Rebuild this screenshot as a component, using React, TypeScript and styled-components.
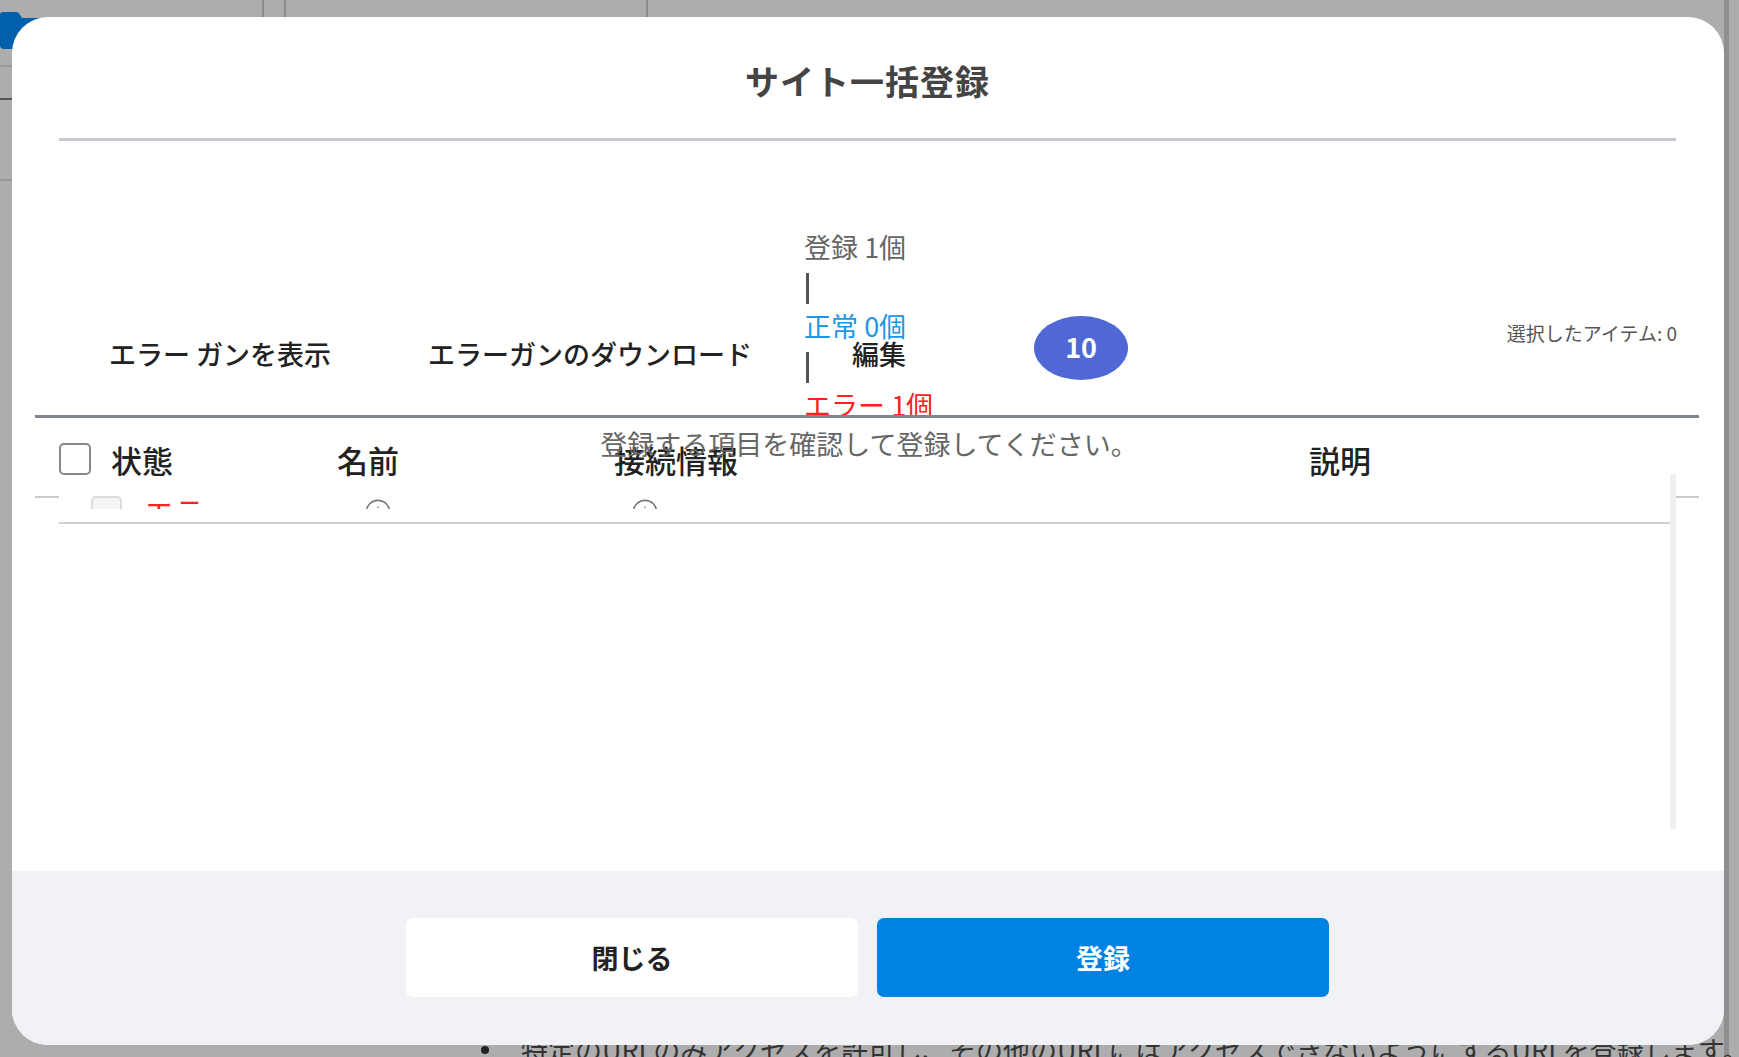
import { Info } from 'lucide-react'
import styled, { createGlobalStyle } from 'styled-components'

const GlobalStyle = createGlobalStyle`
    html, body {
        margin: 0;
        padding: 0;
        height: 1057px;
        overflow: hidden;
        background-color: #ADADAD;
        font-family: "Noto Sans CJK JP", "Noto Sans", sans-serif;
    }
    * {
        box-sizing: border-box;
    }
`

// page behind the dialog
const BackPage = styled.div`
    width: 1729px;
    height: 1057px;
    display: flex;
    flex-direction: column;
    border-right: 5px solid #8F8F91;
`

const BackTabs = styled.div`
    display: flex;
    gap: 20px;
    height: 67px;
    border-bottom: 2px solid #989898;
`

const BackTab = styled.div<{ $width: number; $first?: boolean }>`
    width: ${p => p.$width}px;
    height: 18px;
    border-right: 2px solid #8A8A8A;
    border-left: ${p => (p.$first ? 'none' : '2px solid #8A8A8A')};
`

const BackRule = styled.div<{ $gap: number; $color: string }>`
    margin-top: ${p => p.$gap}px;
    height: 2px;
    background-color: ${p => p.$color};
`

const BackMarker = styled.svg`
    position: absolute;
    left: 0;
    top: 12px;
`

const BackNote = styled.div`
    margin-top: auto;
    margin-bottom: -7px;
    padding-left: 481px;
    display: flex;
    align-items: center;
    gap: 32px;
    height: 28px;
    font-size: 27px;
    line-height: 28px;
    color: #333;
    white-space: nowrap;
`

const BackBullet = styled.span`
    width: 8px;
    height: 8px;
    flex: none;
    border-radius: 50%;
    background-color: #222;
`

// dialog
const Modal = styled.div`
    position: absolute;
    left: 12px;
    top: 17px;
    width: 1712px;
    height: 1028px;
    display: flex;
    flex-direction: column;
    background-color: #FFF;
    border-radius: 36px;
    overflow: hidden;
`

const ModalHeader = styled.div`
    height: 124px;
    margin: 0 48px 0 47px;
    flex: none;
    display: flex;
    align-items: center;
    justify-content: center;
    padding-top: 5px;
    border-bottom: 3px solid #C8C9D0;
`

const Title = styled.h2`
    margin: 0;
    font-size: 34px;
    font-weight: 700;
    letter-spacing: 1px;
    color: #444;
`

const ModalBody = styled.div`
    flex: 1;
    padding: 0 25px 0 23px;
    min-height: 0;
`

const Toolbar = styled.div`
    height: 277px;
    display: flex;
    align-items: flex-start;
    padding-left: 74px;
    border-bottom: 3px solid #7F8590;
    overflow: hidden;
`

const ToolButton = styled.button<{ $gap?: number }>`
    margin: 191px 0 0 ${p => p.$gap ?? 0}px;
    padding: 0;
    height: 44px;
    flex: none;
    border: none;
    background: none;
    font-family: inherit;
    font-size: 27px;
    font-weight: 500;
    line-height: 44px;
    color: #222;
    white-space: nowrap;
`

const Summary = styled.div`
    width: 48px;
    margin: 86px 0 0 52px;
    flex: none;
    display: flex;
    flex-direction: column;
`

const SummaryText = styled.span<{ $color: string }>`
    height: 39.5px;
    font-size: 27px;
    line-height: 40px;
    color: ${p => p.$color};
    white-space: nowrap;
`

const SummaryBar = styled.span`
    display: block;
    width: 3px;
    height: 31px;
    margin: 6.5px 0 2px 2px;
    background-color: #555;
`

const Badge = styled.span`
    width: 94px;
    height: 64px;
    margin: 175px 0 0 128px;
    padding-bottom: 3px;
    flex: none;
    display: flex;
    align-items: center;
    justify-content: center;
    border-radius: 50%;
    background-color: #5068D5;
    font-size: 27px;
    font-weight: 700;
    color: #FFF;
`

const SelectedCount = styled.span`
    margin: 178px 22px 0 auto;
    font-size: 19px;
    line-height: 28px;
    color: #555;
    white-space: nowrap;
`

const TableHead = styled.div`
    position: relative;
    height: 80px;
    padding-left: 24px;
    display: grid;
    grid-template-columns: 52px 226px 277px 695px 1fr;
    align-items: center;
    border-bottom: 2px solid #C8CAD0;
`

const HeadCheckbox = styled.span`
    width: 32px;
    height: 32px;
    margin-top: 3px;
    border: 2px solid #888;
    border-radius: 5px;
    background-color: #FFF;
`

const HeadCell = styled.span`
    padding-top: 4px;
    font-size: 31px;
    font-weight: 500;
    color: #222;
`

const Notice = styled.p`
    position: absolute;
    left: 4px;
    right: 0;
    top: 6px;
    margin: 0;
    text-align: center;
    font-size: 27px;
    line-height: 40px;
    color: #666;
`

const TableArea = styled.div`
    position: relative;
    margin: -2px 23px 0 24px;
    height: 375px;
    background-color: #FFF;
`

const Row = styled.div`
    height: 28px;
    margin-right: 6px;
    border-bottom: 2px solid #D0D2D8;
`

const RowClip = styled.div`
    height: 13px;
    display: grid;
    grid-template-columns: 85px 220px 267px 1fr;
    overflow: hidden;
`

const RowCheckbox = styled.span`
    width: 31px;
    height: 32px;
    margin-left: 32px;
    border: 2px solid #DDD;
    border-radius: 5px;
    background-color: #F5F5F5;
`

const RowStatus = styled.span`
    font-size: 30px;
    line-height: 30px;
    color: #FF2020;
`

const RowInfo = styled.span`
    display: block;
    margin-top: 2px;
    color: #777;
`

const ScrollTrack = styled.div`
    position: absolute;
    right: 0;
    top: -22px;
    width: 6px;
    height: 355px;
    background-color: #F0F0F3;
`

const ModalFooter = styled.div`
    height: 174px;
    flex: none;
    display: flex;
    justify-content: center;
    gap: 19px;
    padding: 47px 1px 0 0;
    background-color: #F1F2F6;
`

const FooterButton = styled.button<{ $primary?: boolean }>`
    width: 452px;
    height: 79px;
    border: none;
    border-radius: 7px;
    background-color: ${p => (p.$primary ? '#0082E3' : '#FFF')};
    font-family: inherit;
    font-size: 27px;
    font-weight: 700;
    color: ${p => (p.$primary ? '#FFF' : '#222')};
`

export default function App() {
    return (
        <>
            <GlobalStyle />
            <BackPage>
                <BackTabs>
                    <BackTab $width={264} $first />
                    <BackTab $width={364} />
                </BackTabs>
                <BackRule $gap={31} $color="#555" />
                <BackRule $gap={79} $color="#989898" />
                <BackNote>
                    <BackBullet />
                    <span>特定のURLのみアクセスを許可し、その他のURLにはアクセスできないようにするURLを登録します。</span>
                </BackNote>
            </BackPage>
            <BackMarker width="60" height="37" viewBox="0 0 60 37">
                <path d="M0 3 Q0 0 3 0 H16 Q19 0 20 3 L22 6 H60 V37 H4 Q0 37 0 33 Z" fill="#0060AD" />
            </BackMarker>
            <Modal>
                <ModalHeader>
                    <Title>サイト一括登録</Title>
                </ModalHeader>
                <ModalBody>
                    <Toolbar>
                        <ToolButton>エラー ガンを表示</ToolButton>
                        <ToolButton $gap={97}>エラーガンのダウンロード</ToolButton>
                        <Summary>
                            <SummaryText $color="#666">登録 1個</SummaryText>
                            <SummaryBar />
                            <SummaryText $color="#1E96E6">正常 0個</SummaryText>
                            <SummaryBar />
                            <SummaryText $color="#FF2020">エラー 1個</SummaryText>
                        </Summary>
                        <ToolButton>編集</ToolButton>
                        <Badge>10</Badge>
                        <SelectedCount>選択したアイテム: 0</SelectedCount>
                    </Toolbar>
                    <TableHead>
                        <HeadCheckbox />
                        <HeadCell>状態</HeadCell>
                        <HeadCell>名前</HeadCell>
                        <HeadCell>接続情報</HeadCell>
                        <HeadCell>説明</HeadCell>
                        <Notice>登録する項目を確認して登録してください。</Notice>
                    </TableHead>
                    <TableArea>
                        <Row>
                            <RowClip>
                                <RowCheckbox />
                                <RowStatus>エラー</RowStatus>
                                <RowInfo><Info size={28} strokeWidth={1.4} /></RowInfo>
                                <RowInfo><Info size={28} strokeWidth={1.4} /></RowInfo>
                            </RowClip>
                        </Row>
                        <ScrollTrack />
                    </TableArea>
                </ModalBody>
                <ModalFooter>
                    <FooterButton>閉じる</FooterButton>
                    <FooterButton $primary>登録</FooterButton>
                </ModalFooter>
            </Modal>
        </>
    )
}
